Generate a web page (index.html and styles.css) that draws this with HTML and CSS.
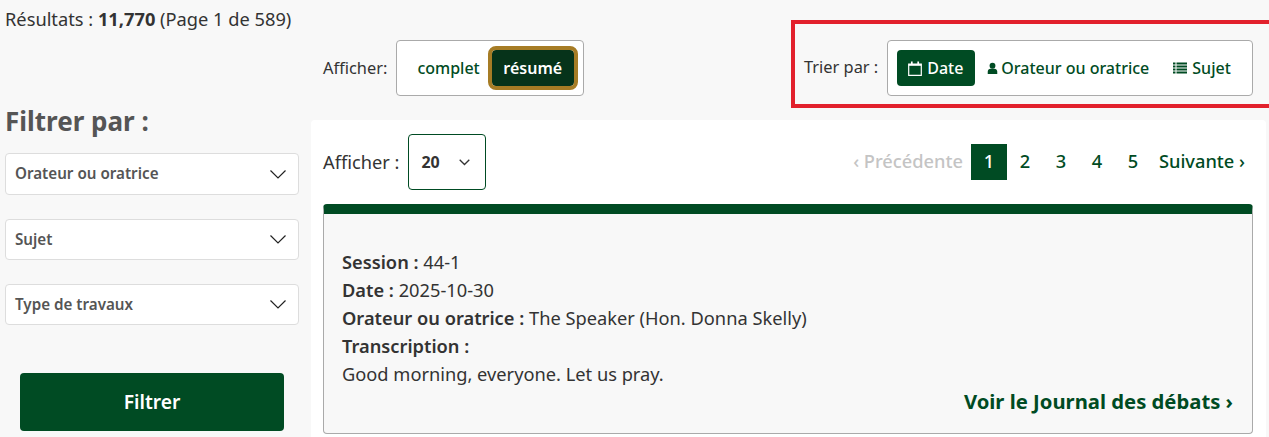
FILE: index.html
```html
<!DOCTYPE html>
<html lang="fr">
<head>
    <meta charset="UTF-8">
    <title>Résultats de recherche</title>
    <link rel="stylesheet" href="styles.css">
</head>
<body>
    <div class="top-row">
        <p class="results">Résultats : <strong>11,770</strong> (Page 1 de 589)</p>

        <div class="view-group">
            <span class="top-label">Afficher:</span>
            <div class="btn-box view-box">
                <a class="toggle" href="#">complet</a>
                <a class="toggle toggle-focus" href="#">résumé</a>
            </div>
        </div>

        <div class="sort-group">
            <span class="top-label">Trier par :</span>
            <div class="btn-box sort-box">
                <a class="toggle toggle-on" href="#">
                    <svg class="icon" viewBox="0 0 14 15" width="14" height="15">
                        <path d="M0.700 3h12.600v11.300h-12.600z" fill="none" stroke="currentColor" stroke-width="1.200"/>
                        <path d="M0.700 3h12.600v1.800h-12.600z" fill="currentColor"/>
                        <path d="M3.800 0.500v3 M10.200 0.500v3" fill="none" stroke="currentColor" stroke-width="1.700"/>
                    </svg>Date</a>
                <a class="toggle" href="#">
                    <svg class="icon icon-person" viewBox="0 0 12 14" width="11" height="13">
                        <circle cx="6" cy="4" r="3.200" fill="currentColor"/>
                        <path d="M0.800 13v-2.500c0-2 1.500-3.300 3-3.300h4.400c1.500 0 3 1.300 3 3.300V13z" fill="currentColor"/>
                    </svg>Orateur ou oratrice</a>
                <a class="toggle" href="#">
                    <svg class="icon" viewBox="0 0 14 12" width="14" height="12">
                        <path d="M0 1.500h2.500 M0 4.500h2.500 M0 7.500h2.500 M0 10.500h2.500 M3.500 1.500h10.500 M3.500 4.500h10.500 M3.500 7.500h10.500 M3.500 10.500h10.500" fill="none" stroke="currentColor" stroke-width="2"/>
                    </svg>Sujet</a>
            </div>
        </div>
    </div>

    <div class="content">
        <aside class="sidebar">
            <h2 class="filter-title">Filtrer par :</h2>
            <div class="filter f-speaker">
                <span class="filter-name">Orateur ou oratrice</span>
                <svg viewBox="0 0 16 9" width="16" height="9"><path d="M0.500 0.500l7.500 7.500 7.500-7.500" fill="none" stroke="#222" stroke-width="1.200"/></svg>
            </div>
            <div class="filter f-subject">
                <span class="filter-name">Sujet</span>
                <svg viewBox="0 0 16 9" width="16" height="9"><path d="M0.500 0.500l7.500 7.500 7.500-7.500" fill="none" stroke="#222" stroke-width="1.200"/></svg>
            </div>
            <div class="filter f-type">
                <span class="filter-name">Type de travaux</span>
                <svg viewBox="0 0 16 9" width="16" height="9"><path d="M0.500 0.500l7.500 7.500 7.500-7.500" fill="none" stroke="#222" stroke-width="1.200"/></svg>
            </div>
            <a class="filter-btn" href="#">Filtrer</a>
        </aside>

        <main class="panel">
            <div class="panel-head">
                <div class="per-page">
                    <span class="per-label">Afficher :</span>
                    <div class="per-select">
                        <strong>20</strong>
                        <svg viewBox="0 0 11 7" width="11" height="7"><path d="M0.700 0.700l4.800 4.800 4.800-4.800" fill="none" stroke="#333" stroke-width="1.300"/></svg>
                    </div>
                </div>
                <nav class="pager">
                    <span class="page-link disabled">‹ Précédente</span>
                    <span class="page-num current">1</span>
                    <a class="page-num" href="#">2</a>
                    <a class="page-num" href="#">3</a>
                    <a class="page-num" href="#">4</a>
                    <a class="page-num" href="#">5</a>
                    <a class="page-link" href="#">Suivante ›</a>
                </nav>
            </div>

            <article class="card">
                <p><strong>Session :</strong> 44-1</p>
                <p><strong>Date :</strong> 2025-10-30</p>
                <p><strong>Orateur ou oratrice :</strong> The Speaker (Hon. Donna Skelly)</p>
                <p><strong>Transcription :</strong></p>
                <p>Good morning, everyone. Let us pray.</p>
                <a class="card-link" href="#">Voir le Journal des débats ›</a>
            </article>
        </main>
    </div>
</body>
</html>
```

FILE: styles.css
```css
* {
    box-sizing: border-box;
}

html,
body {
    height: 437px;
    overflow: hidden;
}

body {
    margin: 0;
    background-color: #f8f8f8;
    color: #333;
    font-family: "Noto Sans", "Open Sans", sans-serif;
    font-size: 18.25px;
}

a {
    text-decoration: none;
    color: #004b23;
}

p {
    margin: 0;
}

.top-row {
    display: flex;
    height: 120px;
}

.results {
    width: 323px;
    padding: 7px 0 0 5px;
    line-height: 24px;
    white-space: nowrap;
}

.view-group {
    display: flex;
    align-items: center;
    gap: 9px;
    height: 56px;
    margin-top: 40px;
}

.sort-group {
    display: flex;
    align-items: flex-start;
    gap: 9px;
    height: 88px;
    margin: 20px -4px 0 auto;
    width: 482px;
    padding: 16px 0 0 9px;
    border: 4px solid #e2202c;
}

.top-label {
    font-size: 16.4px;
    line-height: 54px;
}

.btn-box {
    display: flex;
    align-items: center;
    height: 56px;
    background-color: #fff;
    border: 1px solid #aaa;
    border-radius: 4px;
}

.view-box {
    width: 188px;
    padding-left: 12px;
}

.sort-box {
    width: 366px;
    padding-left: 9px;
}

.toggle {
    display: flex;
    align-items: center;
    height: 36px;
    padding: 0 12px;
    border-radius: 4px;
    font-size: 16px;
    font-weight: 500;
}

.view-box .toggle {
    padding: 0 8px;
}

.toggle-on {
    background-color: #004b23;
    color: #fff;
    padding: 0 11px;
    width: 78px;
}

.view-box .toggle-focus {
    background-color: #06331a;
    color: #fff;
    width: 82px;
    margin-left: 4px;
    padding: 0;
    justify-content: center;
    outline: 4px solid #a67c25;
    font-weight: 600;
}

.icon {
    margin-right: 5px;
    flex-shrink: 0;
}

.icon-person {
    margin-right: 3px;
}

.content {
    display: flex;
    height: 317px;
}

.sidebar {
    width: 311px;
    padding-left: 5px;
    flex-shrink: 0;
}

.filter-title {
    margin: 0 0 12px;
    height: 21px;
    font-size: 26px;
    line-height: 2px;
    font-weight: 700;
    color: #555;
}

.filter {
    display: flex;
    align-items: center;
    justify-content: space-between;
    width: 294px;
    padding: 0 12px 0 9px;
    background-color: #fff;
    border: 1px solid #ddd;
    border-radius: 4px;
    font-size: 15.2px;
    font-weight: 600;
    color: #555;
}

.filter-name {
    margin-bottom: 2px;
}

.f-speaker {
    height: 42px;
    margin-bottom: 24px;
}

.f-subject {
    height: 41px;
    margin-bottom: 24px;
}

.f-type {
    height: 41px;
    margin-bottom: 48px;
}

.filter-btn {
    display: flex;
    align-items: center;
    justify-content: center;
    width: 264px;
    height: 58px;
    margin-left: 15px;
    padding-bottom: 2px;
    background-color: #004b23;
    border-radius: 4px;
    color: #fff;
    font-size: 19.3px;
    font-weight: 600;
}

.panel {
    width: 955px;
    padding: 14px 12px 0;
    background-color: #fff;
    border-radius: 4px 4px 0 0;
}

.panel-head {
    display: flex;
    align-items: center;
    justify-content: space-between;
    height: 56px;
    margin-bottom: 14px;
}

.per-page {
    display: flex;
    align-items: center;
    gap: 9px;
}

.per-label {
    margin-bottom: 2px;
}

.per-select {
    display: flex;
    align-items: center;
    justify-content: space-between;
    width: 78px;
    height: 56px;
    padding: 0 15px 0 12px;
    border: 1px solid #004b23;
    border-radius: 4px;
    font-size: 16px;
}

.pager {
    display: flex;
    align-items: center;
    margin-right: 1px;
    font-weight: 500;
}

.page-link {
    padding: 0 8px 3px;
}

.disabled {
    color: #c4c4c4;
}

.page-num {
    display: flex;
    align-items: center;
    justify-content: center;
    width: 36px;
    height: 36px;
    padding-bottom: 3px;
}

.current {
    background-color: #004b23;
    color: #fff;
}

.card {
    width: 930px;
    height: 230px;
    padding: 34px 18px 0;
    background-color: #f8f8f8;
    border: 1px solid #aaa;
    border-top: 10px solid #004b23;
    border-radius: 4px;
    line-height: 28px;
}

.card strong {
    font-weight: 600;
}

.card-link {
    display: block;
    margin: -1px 1px 0 0;
    text-align: right;
    font-size: 20.25px;
    font-weight: 700;
}
```
